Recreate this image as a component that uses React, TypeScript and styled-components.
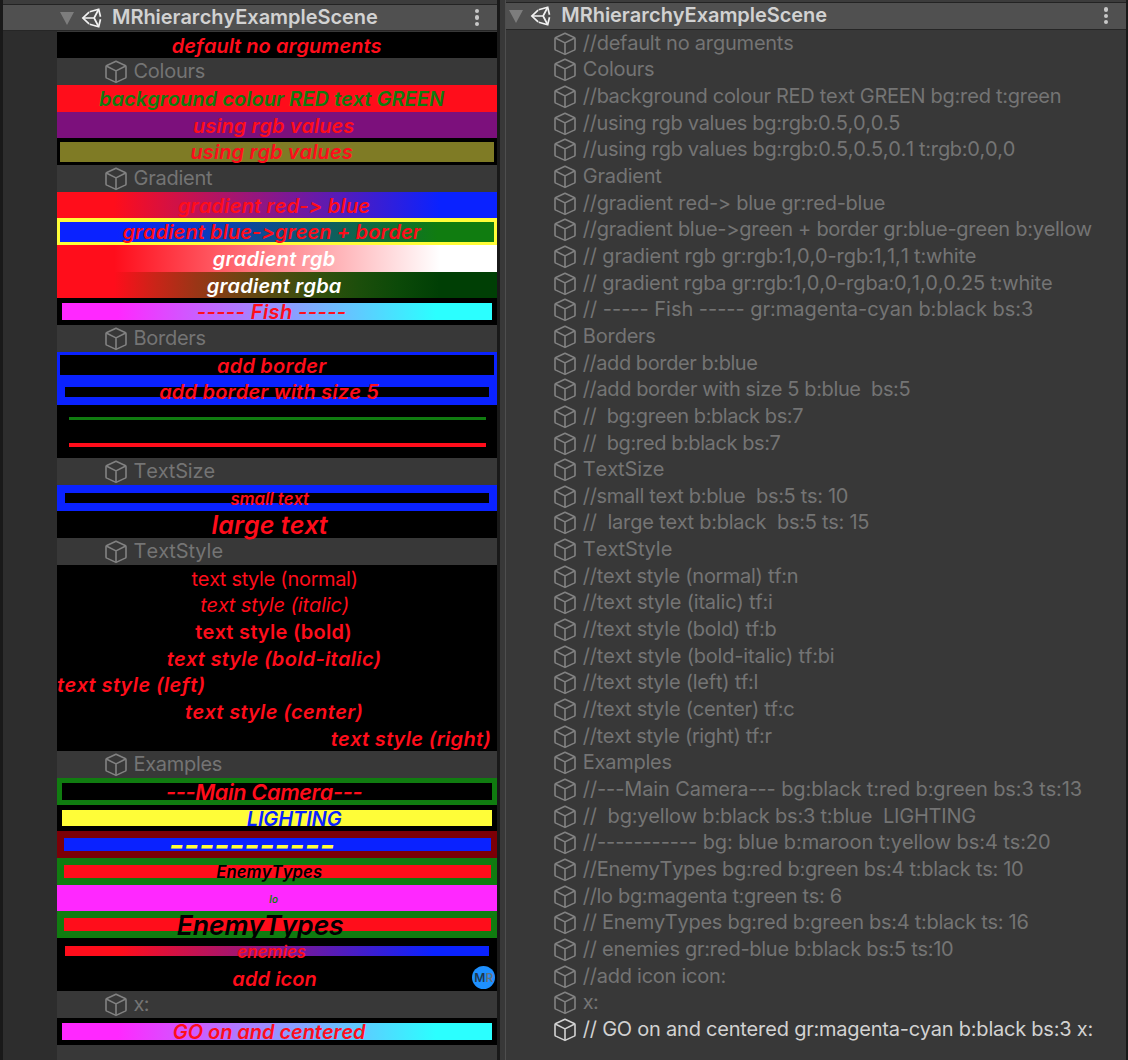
import React from "react";
import styled, { createGlobalStyle } from "styled-components";

const RED = "#ff0d1b";
const GREEN = "#107c10";
const BLUE = "#0a22ff";
const YELLOW = "#fffd38";
const MAGENTA = "#ff28ff";
const CYAN = "#2bffff";
const BLACK = "#000";

const GlobalStyle = createGlobalStyle`
  * { box-sizing: border-box; }
  body {
    margin: 0;
    background: #191919;
    font-family: Inter, "Liberation Sans", sans-serif;
    font-kerning: none;
    overflow: hidden;
  }
`;

const Window = styled.div`
  display: flex;
  width: 1128px;
  height: 1060px;
  background: #191919;
  overflow: hidden;
`;

const Panel = styled.section<{ $width: number; $start: number }>`
  flex: none;
  display: flex;
  flex-direction: column;
  width: ${(p) => p.$width}px;
  margin-left: ${(p) => p.$start}px;
  background: #383838;
`;

const Divider = styled.div`
  flex: none;
  width: 6px;
  margin-left: 3px;
  background: #383838;
  border-right: 1px solid #4e4e4e;
`;

const TopStrip = styled.div<{ $height: number }>`
  flex: none;
  height: ${(p) => p.$height}px;
  background: #3c3c3c;
  border-bottom: 1px solid #232323;
`;

const Header = styled.header<{ $height: number; $indent: number }>`
  flex: none;
  display: flex;
  align-items: center;
  height: ${(p) => p.$height}px;
  padding: 0 15px 0 ${(p) => p.$indent}px;
  background: #505050;
  border-bottom: 1px solid #262626;
`;

const Triangle = styled.span`
  width: 0;
  height: 0;
  margin: 2px 7px 0 0;
  border: 7.5px solid transparent;
  border-top: 13px solid #7d7d7d;
  border-bottom: 0;
`;

const LogoSvg = styled.svg`
  width: 21px;
  height: 20px;
  color: #f2f2f2;
`;

const Title = styled.h1`
  flex: 1;
  margin: 0 0 1px 10px;
  font-size: 20px;
  line-height: 24px;
  font-weight: 600;
  letter-spacing: -0.05px;
  color: #d2d2d2;
`;

const Menu = styled.span`
  display: flex;
  flex-direction: column;
  gap: 2px;
  padding: 0 3px;
`;

const Dot = styled.i`
  width: 4.4px;
  height: 4.4px;
  border-radius: 50%;
  background: #c8c8c8;
`;

const Tree = styled.div<{ $gutter: number; $top: number }>`
  flex: 1;
  min-height: 0;
  padding-top: ${(p) => p.$top}px;
  border-left: ${(p) => p.$gutter}px solid #2d2d2d;
`;

const Row = styled.div<{ $indent: number; $on?: boolean }>`
  display: flex;
  align-items: flex-start;
  height: calc(80px / 3);
  padding-left: ${(p) => p.$indent}px;
  color: ${(p) => (p.$on ? "#d2d2d2" : "#747474")};
`;

const CubeSvg = styled.svg<{ $on?: boolean }>`
  flex: none;
  width: 24px;
  height: 24px;
  margin-top: 2px;
  color: ${(p) => (p.$on ? "#d2d2d2" : "#828282")};
`;

const RowText = styled.span<{ $track?: number }>`
  margin-left: 5.5px;
  font-size: 20px;
  line-height: 27px;
  letter-spacing: ${(p) => p.$track ?? -0.25}px;
  white-space: pre;
`;

const Banner = styled.div<{ $edge: string }>`
  display: grid;
  grid-template: 100% / 100%;
  height: calc(80px / 3);
  background: ${(p) => p.$edge};
`;

const Fill = styled.div<{ $fill: string; $inset: number }>`
  grid-area: 1 / 1;
  margin: ${(p) => (p.$inset * 5) / 3}px;
  background: ${(p) => p.$fill};
`;

const Label = styled.span<{
  $color: string;
  $size: number;
  $weight: number;
  $italic: boolean;
  $align: string;
  $shift: number;
  $track: number;
}>`
  grid-area: 1 / 1;
  margin-right: ${(p) => p.$shift}px;
  font-size: ${(p) => (p.$size * 5) / 3}px;
  line-height: 29px;
  font-weight: ${(p) => p.$weight};
  font-style: ${(p) => (p.$italic ? "italic" : "normal")};
  text-align: ${(p) => p.$align};
  letter-spacing: ${(p) => p.$track}px;
  color: ${(p) => p.$color};
  white-space: pre;
`;

const Badge = styled.span`
  grid-area: 1 / 1;
  justify-self: end;
  align-self: center;
  display: flex;
  align-items: center;
  justify-content: center;
  width: 23px;
  height: 23px;
  margin-right: 2px;
  border-radius: 50%;
  background: #1e90ff;
  font-size: 12px;
  font-weight: 600;
  color: #1f3850;
`;

const BadgeTail = styled.span`
  color: #66707c;
`;

function Cube({ on }: { on?: boolean }) {
  return (
    <CubeSvg $on={on} viewBox="0 0 24 24" fill="none" stroke="currentColor" strokeWidth="1.6" strokeLinejoin="round">
      <path d="M12 1.2 L21.2 5.4 Q22 5.8 22 6.7 V16.9 Q22 17.7 21.2 18.1 L12 22.4 L2.8 18.1 Q2 17.7 2 16.9 V6.7 Q2 5.8 2.8 5.4 Z" />
      <path d="M2.3 6 L12 10.9 L21.7 6 M12 10.9 V22.2" />
    </CubeSvg>
  );
}

function Logo() {
  return (
    <LogoSvg viewBox="0 0 20 20" fill="none" stroke="currentColor" strokeWidth="1.7" strokeLinejoin="miter">
      <path d="M7.6 4.2 L1.4 10 L7.6 15.8" />
      <path d="M8.2 3.7 L17.2 1.2 L19 8.8" />
      <path d="M8.2 16.3 L17.2 18.8 L19 11.2" />
      <path d="M2 10 H12.6 M12.6 10 L16.8 2 M12.6 10 L16.8 18" />
    </LogoSvg>
  );
}

const fade = (from: string, to: string) => `linear-gradient(90deg, ${from} 13%, ${to} 87%)`;

const fadeOut = () => {
  const stops = Array.from({ length: 9 }, (_, i) => {
    const t = i / 8;
    const light = 1 - 0.75 * t;
    return `rgb(${Math.round(255 * (1 - t) * light)}, ${Math.round(13 + (255 * t * light * 50) / 64)}, ${Math.round(27 - 22 * t)}) ${13 + 74 * t}%`;
  });
  return `linear-gradient(90deg, ${stops.join(", ")})`;
};

type Item = {
  text: string;
  object?: boolean;
  fill?: string;
  edge?: string;
  inset?: number;
  color?: string;
  size?: number;
  weight?: number;
  italic?: boolean;
  align?: string;
  shift?: number;
  track?: number;
  icon?: boolean;
};

const styledItems: Item[] = [
  { text: "default no arguments", shift: 1, track: 0.05 },
  { text: "Colours", object: true },
  { text: "background colour RED text GREEN", fill: RED, color: GREEN, track: 0.05 },
  { text: "using rgb values", fill: "#7c107c", shift: 7, track: 0.05 },
  { text: "using rgb values", fill: "#7f7b25", edge: BLACK, inset: 2 },
  { text: "Gradient", object: true },
  { text: "gradient red-> blue", fill: fade(RED, BLUE), shift: 6, track: 0.2 },
  { text: "gradient blue->green + border", fill: fade(BLUE, GREEN), edge: YELLOW, inset: 2 },
  { text: "gradient rgb", fill: fade(RED, "#fff"), color: "#fff", shift: 6, track: 0.25 },
  { text: "gradient rgba", fill: fadeOut(), color: "#fff", shift: 6, track: 0.2 },
  { text: "----- Fish -----", fill: fade(MAGENTA, CYAN), edge: BLACK, inset: 3, track: 0.4 },
  { text: "Borders", object: true, track: -0.35 },
  { text: "add border", edge: BLUE, inset: 2, track: 0.2 },
  { text: "add border with size 5", edge: BLUE, inset: 5, shift: 16, track: 0.2 },
  { text: "", fill: GREEN, edge: BLACK, inset: 7 },
  { text: "", fill: RED, edge: BLACK, inset: 7 },
  { text: "TextSize", object: true, track: -0.1 },
  { text: "small text", edge: BLUE, inset: 5, size: 10, shift: 15, track: 0 },
  { text: "large text", size: 15, shift: 15 },
  { text: "TextStyle", object: true, track: 0.05 },
  { text: "text style (normal)", weight: 400, italic: false, shift: 5, track: -0.27 },
  { text: "text style (italic)", weight: 400, shift: 5, track: -0.1 },
  { text: "text style (bold)", italic: false, shift: 7, track: 0.32 },
  { text: "text style (bold-italic)", shift: 6, track: 0.3 },
  { text: "text style (left)", align: "left", track: 0.45 },
  { text: "text style (center)", shift: 6, track: 0.37 },
  { text: "text style (right)", align: "right", shift: 6, track: 0.37 },
  { text: "Examples", object: true, track: -0.3 },
  { text: "---Main Camera---", edge: GREEN, inset: 3, size: 13, shift: 26, track: -0.35 },
  { text: "LIGHTING", fill: YELLOW, edge: BLACK, inset: 3, color: BLUE, shift: -34, track: -0.1 },
  { text: "-----------", fill: BLUE, edge: "#7c0007", inset: 4, color: YELLOW, size: 20, shift: 51, track: -0.45 },
  { text: "EnemyTypes", fill: RED, edge: GREEN, inset: 4, color: BLACK, size: 10, shift: 16 },
  { text: "lo", fill: MAGENTA, color: GREEN, size: 6, shift: 7 },
  { text: "EnemyTypes", fill: RED, edge: GREEN, inset: 4, color: BLACK, size: 16, shift: 34, track: -0.1 },
  { text: "enemies", fill: fade(RED, BLUE), edge: BLACK, inset: 5, size: 10, shift: 11 },
  { text: "add icon", icon: true, shift: 5 },
  { text: "x:", object: true, track: -0.7 },
  { text: "GO on and centered", fill: fade(MAGENTA, CYAN), edge: BLACK, inset: 3, shift: 16, track: -0.05 },
];

type RawName = [name: string, track?: number];

const rawNames: RawName[] = [
  ["//default no arguments"],
  ["Colours"],
  ["//background colour RED text GREEN bg:red t:green", -0.28],
  ["//using rgb values bg:rgb:0.5,0,0.5", -0.34],
  ["//using rgb values bg:rgb:0.5,0.5,0.1 t:rgb:0,0,0", -0.33],
  ["Gradient"],
  ["//gradient red-> blue gr:red-blue"],
  ["//gradient blue->green + border gr:blue-green b:yellow", -0.28],
  ["// gradient rgb gr:rgb:1,0,0-rgb:1,1,1 t:white", -0.18],
  ["// gradient rgba gr:rgb:1,0,0-rgba:0,1,0,0.25 t:white", -0.23],
  ["// ----- Fish ----- gr:magenta-cyan b:black bs:3", -0.02],
  ["Borders"],
  ["//add border b:blue", -0.45],
  ["//add border with size 5 b:blue  bs:5", -0.39],
  ["//  bg:green b:black bs:7", -0.42],
  ["//  bg:red b:black bs:7", -0.42],
  ["TextSize", -0.1],
  ["//small text b:blue  bs:5 ts: 10", -0.33],
  ["//  large text b:black  bs:5 ts: 15"],
  ["TextStyle", 0.05],
  ["//text style (normal) tf:n", -0.28],
  ["//text style (italic) tf:i", -0.18],
  ["//text style (bold) tf:b"],
  ["//text style (bold-italic) tf:bi", -0.18],
  ["//text style (left) tf:l"],
  ["//text style (center) tf:c"],
  ["//text style (right) tf:r", -0.31],
  ["Examples"],
  ["//---Main Camera--- bg:black t:red b:green bs:3 ts:13", -0.11],
  ["//  bg:yellow b:black bs:3 t:blue  LIGHTING", -0.21],
  ["//----------- bg: blue b:maroon t:yellow bs:4 ts:20", -0.1],
  ["//EnemyTypes bg:red b:green bs:4 t:black ts: 10", -0.28],
  ["//lo bg:magenta t:green ts: 6", -0.34],
  ["// EnemyTypes bg:red b:green bs:4 t:black ts: 16", -0.28],
  ["// enemies gr:red-blue b:black bs:5 ts:10", -0.28],
  ["//add icon icon:"],
  ["x:", -0.7],
  ["// GO on and centered gr:magenta-cyan b:black bs:3 x:", -0.23],
];

function SceneHeader({ height, indent }: { height: number; indent: number }) {
  return (
    <Header $height={height} $indent={indent}>
      <Triangle />
      <Logo />
      <Title>MRhierarchyExampleScene</Title>
      <Menu>
        <Dot />
        <Dot />
        <Dot />
      </Menu>
    </Header>
  );
}

function StyledRow({ item }: { item: Item }) {
  if (item.object) {
    return (
      <Row $indent={47}>
        <Cube />
        <RowText $track={item.track}>{item.text}</RowText>
      </Row>
    );
  }
  return (
    <Banner $edge={item.edge ?? item.fill ?? BLACK}>
      <Fill $fill={item.fill ?? BLACK} $inset={item.inset ?? 0} />
      <Label
        $color={item.color ?? RED}
        $size={item.size ?? 12}
        $weight={item.weight ?? 600}
        $italic={item.italic ?? true}
        $align={item.align ?? "center"}
        $shift={item.shift ?? 11}
        $track={item.track ?? 0.1}
      >
        {item.text}
      </Label>
      {item.icon && (
        <Badge>
          M<BadgeTail>R</BadgeTail>
        </Badge>
      )}
    </Banner>
  );
}

export default function App() {
  return (
    <Window>
      <GlobalStyle />
      <Panel $width={494.3} $start={3}>
        <TopStrip $height={5} />
        <SceneHeader height={26} indent={57} />
        <Tree $gutter={54} $top={0.67}>
          {styledItems.map((item, i) => (
            <StyledRow key={i} item={item} />
          ))}
        </Tree>
      </Panel>
      <Divider />
      <Panel $width={620} $start={0}>
        <TopStrip $height={3} />
        <SceneHeader height={26.67} indent={3} />
        <Tree $gutter={0} $top={0}>
          {rawNames.map(([name, track], i) => {
            const on = i === rawNames.length - 1;
            return (
              <Row key={i} $indent={47} $on={on}>
                <Cube on={on} />
                <RowText $track={track}>{name}</RowText>
              </Row>
            );
          })}
        </Tree>
      </Panel>
    </Window>
  );
}
